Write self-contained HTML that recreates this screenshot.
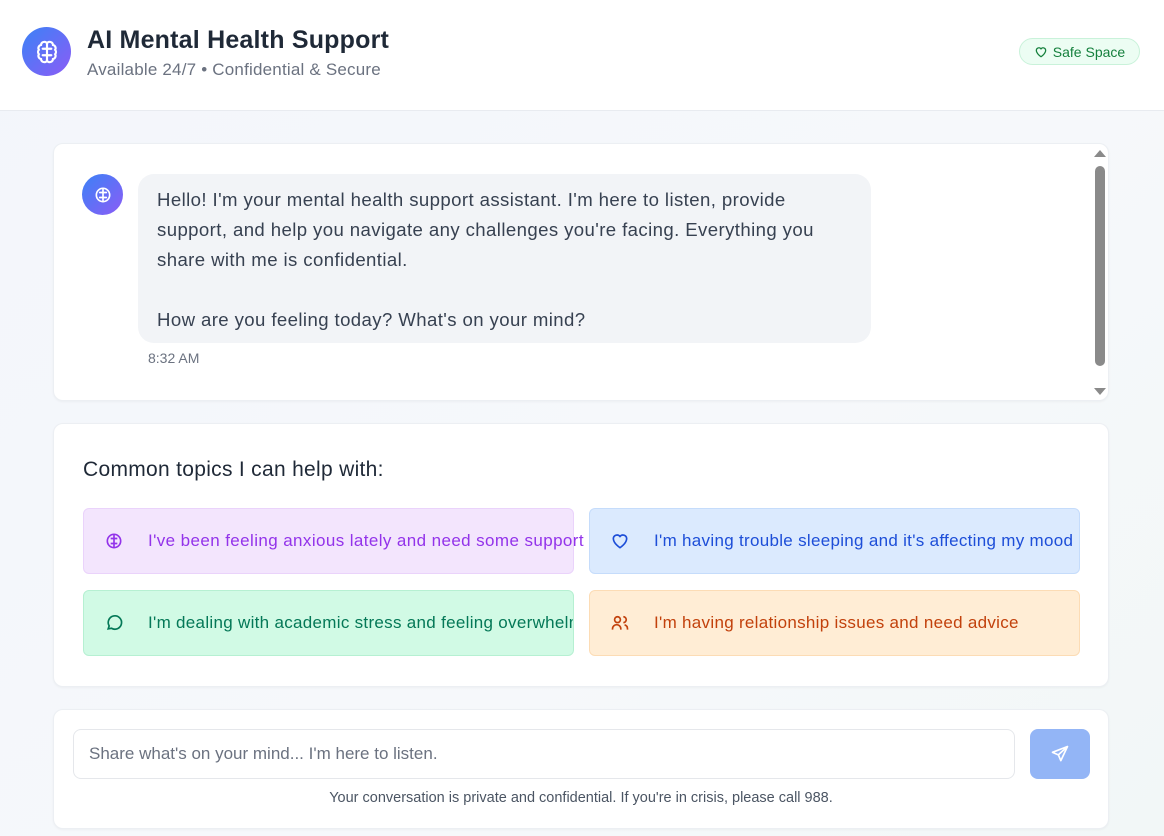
<!DOCTYPE html>
<html><head><meta charset="utf-8"><style>
*{box-sizing:border-box;margin:0;padding:0}
body{width:1164px;height:836px;overflow:hidden;background:linear-gradient(135deg,#f3f6fb,#f6f8fb 60%,#f2f7f7);font-family:"Liberation Sans",sans-serif;color:#1f2937;position:relative}
.hdr{position:absolute;left:0;top:0;width:1164px;height:111px;background:#fff;border-bottom:1px solid #e8ebf0}
.av{position:absolute;border-radius:50%;background:linear-gradient(135deg,#3b82f6,#8b5cf6);display:flex;align-items:center;justify-content:center}
.card{position:absolute;left:53px;width:1056px;background:#fff;border:1px solid #eceff3;border-radius:10px;box-shadow:0 1px 2px rgba(0,0,0,.04)}
.topic{position:absolute;width:491px;height:66px;border-radius:6px;display:flex;align-items:center;font-size:17px;letter-spacing:0.45px;white-space:nowrap}
.topic svg{margin-left:20px;margin-right:24px;flex:none}
</style></head><body>
<div class="hdr">
 <div class="av" style="left:22px;top:27px;width:49px;height:49px">
  <svg width="26" height="26" viewBox="0 0 24 24" fill="none" stroke="#fff" stroke-width="2" stroke-linecap="round"><path d="M12 4a3 3 0 0 0-5.5 1.5A3 3 0 0 0 4.5 10a3 3 0 0 0 0 4 3 3 0 0 0 2 4.5A3 3 0 0 0 12 20zM12 4a3 3 0 0 1 5.5 1.5 3 3 0 0 1 2 4.5 3 3 0 0 1 0 4 3 3 0 0 1-2 4.5A3 3 0 0 1 12 20zM12 4v16M8 9h4M16 9h-4M8 15h4M16 15h-4"/></svg>
 </div>
 <div style="position:absolute;left:87px;top:26px;font-size:25px;font-weight:bold;color:#1f2937;letter-spacing:0.2px">AI Mental Health Support</div>
 <div style="position:absolute;left:87px;top:60px;font-size:17px;color:#6b7280;letter-spacing:0.2px">Available 24/7 • Confidential &amp; Secure</div>
 <div style="position:absolute;left:1019px;top:38px;width:121px;height:27px;border-radius:14px;background:#ecfdf3;border:1px solid #c9f2da;color:#15803d;font-size:14px;display:flex;align-items:center;justify-content:center;gap:5px">
  <svg width="14" height="14" viewBox="0 0 24 24" fill="none" stroke="#15803d" stroke-width="2.2"><path d="M12 20s-8-5-8-11a4.5 4.5 0 0 1 8-2.5A4.5 4.5 0 0 1 20 9c0 6-8 11-8 11z"/></svg>Safe Space</div>
</div>

<div class="card" style="top:143px;height:258px">
 <div class="av" style="left:28px;top:30px;width:41px;height:41px">
  <svg width="20" height="20" viewBox="0 0 24 24" fill="none" stroke="#fff" stroke-width="2" stroke-linecap="round"><circle cx="12" cy="12" r="8"/><path d="M12 4v16M8 9h4M16 9h-4M8 15h4M16 15h-4"/></svg>
 </div>
 <div style="position:absolute;left:84px;top:30px;width:733px;height:169px;background:#f2f4f7;border-radius:16px;padding:11px 19px;font-size:18.6px;letter-spacing:0.4px;line-height:30px;color:#374151;white-space:nowrap">Hello! I'm your mental health support assistant. I'm here to listen, provide<br>support, and help you navigate any challenges you're facing. Everything you<br>share with me is confidential.<br><br>How are you feeling today? What's on your mind?</div>
 <div style="position:absolute;left:94px;top:206px;font-size:14px;color:#6b7280">8:32 AM</div>
 <div style="position:absolute;left:1041px;top:22px;width:10px;height:200px;background:#8a8a8a;border-radius:5px"></div>
 <div style="position:absolute;left:1040px;top:6px;width:0;height:0;border-left:6px solid transparent;border-right:6px solid transparent;border-bottom:7px solid #8a8a8a"></div>
 <div style="position:absolute;left:1040px;top:244px;width:0;height:0;border-left:6px solid transparent;border-right:6px solid transparent;border-top:7px solid #8a8a8a"></div>
</div>

<div class="card" style="top:423px;height:264px">
 <div style="position:absolute;left:29px;top:34px;font-size:21px;color:#1f2937;letter-spacing:0.3px">Common topics I can help with:</div>
</div>
<div class="topic" style="left:83px;top:508px;background:#f3e5fd;border:1px solid #ead3fb;color:#9333ea">
 <svg width="20" height="20" viewBox="0 0 24 24" fill="none" stroke="#9333ea" stroke-width="2"><circle cx="12" cy="12" r="8"/><path d="M12 4v16M8 9h4M16 9h-4M8 15h4M16 15h-4"/></svg><span style="letter-spacing:0.4px">I've been feeling anxious lately and need some support</span></div>
<div class="topic" style="left:589px;top:508px;background:#dbeafe;border:1px solid #c5dcfb;color:#1d4ed8">
 <svg width="20" height="20" viewBox="0 0 24 24" fill="none" stroke="#1d4ed8" stroke-width="2"><path d="M12 20s-8-5-8-11a4.5 4.5 0 0 1 8-2.5A4.5 4.5 0 0 1 20 9c0 6-8 11-8 11z"/></svg><span style="letter-spacing:0.3px">I'm having trouble sleeping and it's affecting my mood</span></div>
<div class="topic" style="left:83px;top:590px;background:#d1fae5;border:1px solid #b6f0d2;color:#047857">
 <svg width="20" height="20" viewBox="0 0 24 24" fill="none" stroke="#047857" stroke-width="2"><path d="M5 19l1.2-3.5A8 8 0 1 1 9 18.3z"/></svg><span style="display:inline-block;width:440px;overflow:hidden;letter-spacing:0.3px">I'm dealing with academic stress and feeling overwhelmed</span></div>
<div class="topic" style="left:589px;top:590px;background:#ffedd5;border:1px solid #fcdcb5;color:#c2410c">
 <svg width="20" height="20" viewBox="0 0 24 24" fill="none" stroke="#c2410c" stroke-width="2"><circle cx="9" cy="8" r="3.5"/><path d="M3 20v-1a5 5 0 0 1 10 0v1M16 4.5a3.5 3.5 0 0 1 0 7M21 20v-1a5 5 0 0 0-3.5-4.8"/></svg><span style="letter-spacing:0.3px">I'm having relationship issues and need advice</span></div>

<div class="card" style="top:709px;height:120px">
 <div style="position:absolute;left:19px;top:19px;width:942px;height:50px;border:1px solid #e5e7eb;border-radius:8px;padding-left:15px;display:flex;align-items:center;font-size:17px;color:#6b7280">Share what's on your mind... I'm here to listen.</div>
 <div style="position:absolute;left:976px;top:19px;width:60px;height:50px;background:#93b5f6;border-radius:8px;display:flex;align-items:center;justify-content:center">
  <svg width="20" height="20" viewBox="0 0 24 24" fill="none" stroke="#fff" stroke-width="2" stroke-linejoin="round"><path d="M21 3L3 10l7 3 3 7zM21 3L10 13"/></svg></div>
 <div style="position:absolute;left:0;width:100%;top:80px;text-align:center;font-size:14.5px;color:#4b5563">Your conversation is private and confidential. If you're in crisis, please call 988.</div>
</div>
</body></html>
